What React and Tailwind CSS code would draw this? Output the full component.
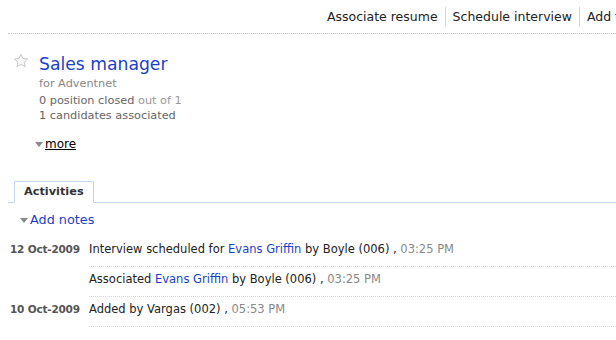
const font = "font-['DejaVu_Sans',Verdana,sans-serif]";

const Star = () => (
  <svg width="16" height="16" viewBox="0 0 16 16" className="mt-[1px] shrink-0">
    <path
      d="M8 1.2l2 4.3 4.6.5-3.4 3.1.9 4.6L8 11.4l-4.1 2.3.9-4.6L1.4 6l4.6-.5z"
      fill="#fafafa"
      stroke="#c8c8c8"
      strokeWidth="1"
      strokeLinejoin="round"
    />
  </svg>
);

const Caret = () => (
  <span className="mr-[2px] inline-block h-0 w-0 border-x-[4px] border-t-[5px] border-x-transparent border-t-[#8a8a8a] align-middle" />
);

const activities = [
  {
    date: "12 Oct-2009",
    pre: "Interview scheduled for ",
    name: "Evans Griffin",
    post: " by Boyle (006) , ",
    time: "03:25 PM",
  },
  { date: "", pre: "Associated ", name: "Evans Griffin", post: " by Boyle (006) , ", time: "03:25 PM" },
  { date: "10 Oct-2009", pre: "Added by Vargas (002) , ", name: "", post: "", time: "05:53 PM" },
];

export default function App() {
  return (
    <div className={`${font} h-[340px] w-[616px] overflow-hidden bg-white text-[#222]`}>
      <div className="ml-[8px] flex h-[34px] items-center justify-end overflow-hidden whitespace-nowrap border-b border-dotted border-[#c4c4c4] pt-[1px] text-[12.5px] text-[#222]">
        <div className="-mr-[34px] flex items-center">
          <span className="pr-[7px]">Associate resume</span>
          <span className="h-[20px] w-px bg-[#d4d4d4]" />
          <span className="px-[7px]">Schedule interview</span>
          <span className="h-[20px] w-px bg-[#d4d4d4]" />
          <span className="pl-[7px]">Add to list</span>
        </div>
      </div>

      <div className="flex gap-[10px] pl-[13px] pt-[18px]">
        <Star />
        <div>
          <div className="text-[17.2px] leading-[24px] text-[#1b3fcb]">Sales manager</div>
          <div className="text-[11.3px] leading-[15px] text-[#888]">for Adventnet</div>
          <div className="mt-[2px] text-[11.3px] leading-[15px] text-[#666]">
            0 position closed <span className="text-[#999]">out of 1</span>
          </div>
          <div className="text-[11.3px] leading-[15px] text-[#666]">1 candidates associated</div>
        </div>
      </div>

      <div className="pl-[35px] pt-[13px] text-[12px] leading-[16px] text-black">
        <Caret />
        <span className="underline">more</span>
      </div>

      <div className="ml-[8px] mt-[29px] flex border-b border-[#c5d8f3]">
        <div className="ml-[6px] -mb-px border border-b-white border-[#c5d8f3] bg-white px-[9px] pb-[3px] pt-[3px] text-[11.3px] font-bold leading-[14px] text-[#333]">
          Activities
        </div>
      </div>

      <div className="pl-[20px] pt-[9px] text-[12.8px] leading-[16px] text-[#1b3fcb]">
        <Caret />
        Add notes
      </div>

      <div className="mt-[9px]">
        {activities.map((a, i) => (
          <div key={i} className="flex text-[11.5px] leading-[14px]">
            <div className="w-[89px] shrink-0 pl-[10px] pt-[5px] text-[10.5px] font-bold tracking-[-0.2px] text-[#555]">
              {a.date}
            </div>
            <div className="flex-1 whitespace-nowrap border-b border-dotted border-[#d6d6d6] pb-[10px] pt-[5px] text-[#222]">
              {a.pre}
              {a.name && <span className="text-[#1b3fcb]">{a.name}</span>}
              {a.post}
              <span className="text-[#888]">{a.time}</span>
            </div>
          </div>
        ))}
      </div>
    </div>
  );
}
